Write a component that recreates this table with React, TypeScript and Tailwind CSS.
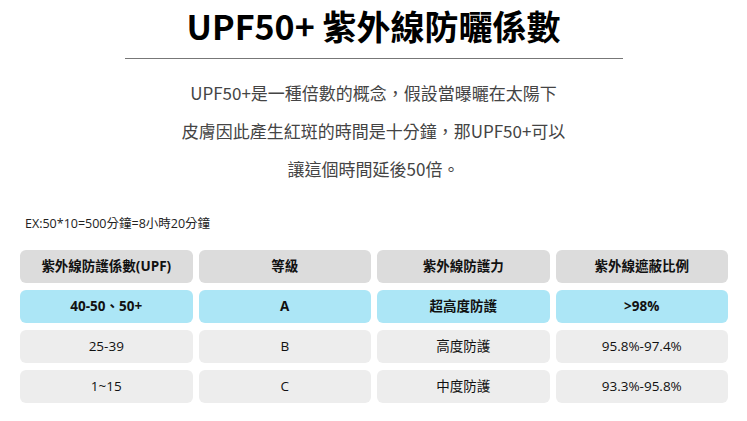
const headers = ["紫外線防護係數(UPF)", "等級", "紫外線防護力", "紫外線遮蔽比例"];

const rows = [
  { cells: ["40-50、50+", "A", "超高度防護", ">98%"], highlight: true },
  { cells: ["25-39", "B", "高度防護", "95.8%-97.4%"], highlight: false },
  { cells: ["1~15", "C", "中度防護", "93.3%-95.8%"], highlight: false },
];

function Cell({ text, className }: { text: string; className: string }) {
  return (
    <div className={`h-[33px] rounded-[6px] flex items-center justify-center text-[13.5px] text-[#111] ${className}`}>
      {text}
    </div>
  );
}

export default function App() {
  return (
    <div
      className="w-[747px] h-[421px] bg-white overflow-hidden"
      style={{ fontFamily: '"Noto Sans CJK TC", "Noto Sans", sans-serif' }}
    >
      <h1 className="pt-[4px] text-center text-[34px] leading-[44px] font-bold text-black">
        UPF50+ 紫外線防曬係數
      </h1>
      <div className="mx-auto mt-[10px] w-[498px] h-px bg-[#777]" />
      <div className="mt-[15px] text-center text-[17px] leading-[38px] text-[#444]">
        <p>UPF50+是一種倍數的概念，假設當曝曬在太陽下</p>
        <p>皮膚因此產生紅斑的時間是十分鐘，那UPF50+可以</p>
        <p>讓這個時間延後50倍。</p>
      </div>
      <p
        className="mt-[27px] pl-[25px] text-[12.5px] leading-[18px] text-[#222]"
        style={{ fontFamily: '"Open Sans", "Noto Sans CJK TC", sans-serif' }}
      >
        EX:50*10=500分鐘=8小時20分鐘
      </p>
      <div
        className="mx-[20px] mt-[17px] w-[708px] grid grid-cols-4 gap-x-[6px] gap-y-[7px]"
        style={{ fontFamily: '"Open Sans", "Noto Sans CJK TC", sans-serif' }}
      >
        {headers.map((h) => (
          <Cell key={h} text={h} className="bg-[#dcdcdc] font-bold" />
        ))}
        {rows.map((r) =>
          r.cells.map((c, i) => (
            <Cell
              key={r.cells[0] + i}
              text={c}
              className={r.highlight ? "bg-[#ace6f6] font-bold" : "bg-[#ededed]"}
            />
          ))
        )}
      </div>
    </div>
  );
}
